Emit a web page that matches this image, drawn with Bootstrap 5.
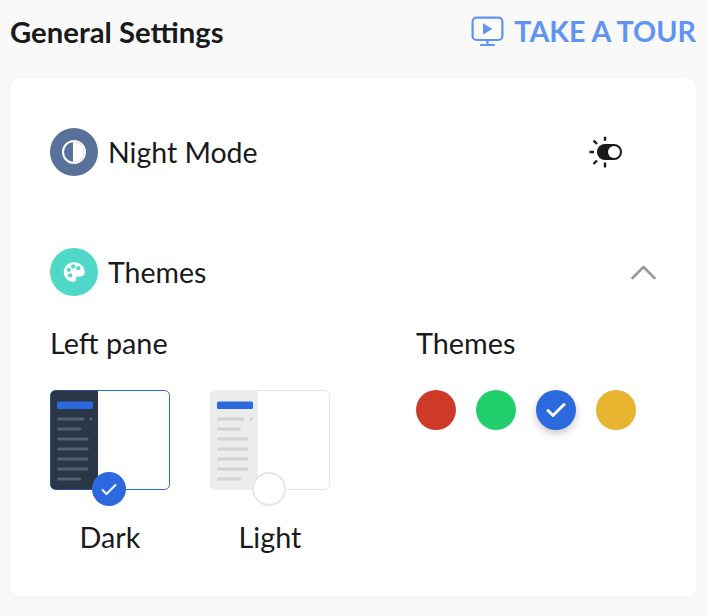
<!DOCTYPE html>
<html lang="en">
<head>
<meta charset="utf-8">
<title>General Settings</title>
<link rel="stylesheet" href="https://cdn.jsdelivr.net/npm/bootstrap@5.3.0/dist/css/bootstrap.min.css">
<style>
html,body{height:100%}
body{background:#f9f9f9;font-family:Lato,"Liberation Sans",sans-serif;color:#1a1a1c;overflow:hidden}
.page-wrap{width:708px;height:616px;padding:0 12px 20px 10px}
.top-bar{height:78px;padding-bottom:15px}
.page-title{font-size:29.300px;font-weight:700;line-height:1;margin:0}
.tour-link{font-size:28.700px;font-weight:700;color:#5f94f0;text-decoration:none;line-height:1;gap:10px}
.panel{background:#fff;border-radius:10px;height:518px;padding:50px 40px 0;box-shadow:0 0 12px rgba(0,0,0,.025)}
.feature-row{height:48px;gap:10px;font-size:28.500px;line-height:1}
.feature-icon{width:48px;height:48px;border-radius:50%}
.night-bg{background:#587199}
.theme-bg{background:#4fd8c8}
.toggle-slot{margin-right:33px}
.second-row{margin-top:72px}
.pick-row{margin-top:30px}
.pane-col{width:366px}
.pick-title{font-size:28.800px;line-height:34px;margin:0}
.thumb-row{margin-top:30px;gap:40px}
.thumb-item{width:120px}
.thumb-box{width:120px;height:100px}
.thumb-box svg{display:block}
.thumb-tick{position:absolute;left:41.500px;top:82px;width:34px;height:34px;border-radius:50%;background:#2c68de}
.thumb-empty{background:#fff;border:2px solid #e6e6e6}
.thumb-name{font-size:28.800px;line-height:34px;margin-top:30px;text-align:center}
.swatch-row{margin-top:30px;gap:20px}
.swatch{width:40px;height:40px;border-radius:50%}
.sw-red{background:#cd3a27}
.sw-green{background:#20cf6b}
.sw-blue{background:#2c68de;box-shadow:0 4px 8px rgba(0,0,0,.2)}
.sw-yellow{background:#e6b42e}
</style>
</head>
<body>
<div class="page-wrap">
  <div class="top-bar d-flex justify-content-between align-items-center">
    <h1 class="page-title">General Settings</h1>
    <a class="tour-link d-flex align-items-center" href="#">
      <svg width="33" height="31" viewBox="0 0 33 31" fill="none" stroke="#5f94f0" stroke-width="2.2">
        <rect x="1.600" y="1.600" width="29.800" height="22.400" rx="4"/>
        <path d="M12 7.200v11.400l9.400-5.700z" fill="#5f94f0" stroke="none"/>
        <path d="M16.500 24v4.500M10 29h13" stroke-linecap="round"/>
      </svg>
      <span>TAKE A TOUR</span>
    </a>
  </div>
  <div class="panel">
    <div class="feature-row d-flex align-items-center">
      <span class="feature-icon night-bg d-flex align-items-center justify-content-center">
        <svg width="24" height="24" viewBox="0 0 24 24">
          <circle cx="12" cy="12" r="11" fill="none" stroke="#fff" stroke-width="2"/>
          <path d="M12.500 1v22h-1.500V1z" fill="#fff"/>
          <path d="M12 2a10 10 0 0 1 0 20z" fill="#fff"/>
        </svg>
      </span>
      <span>Night Mode</span>
      <span class="ms-auto toggle-slot d-flex">
        <svg width="34" height="34" viewBox="0 0 34 34">
          <g stroke="#1a1a1c" stroke-width="2.400">
            <path d="M.5 17H5M16 1.700v4M16 27.500v5M4.500 5.500l3.500 3.500M4.500 29l3.500-3.500"/>
          </g>
          <rect x="8" y="9" width="25" height="16" rx="8" fill="#1a1a1c"/>
          <circle cx="25" cy="17" r="6" fill="#fff"/>
        </svg>
      </span>
    </div>
    <div class="feature-row second-row d-flex align-items-center">
      <span class="feature-icon theme-bg d-flex align-items-center justify-content-center">
        <svg width="24" height="24" viewBox="0 0 28 28">
          <path d="M14 2.500C7.500 2.500 2 7.600 2 14s5.500 11.500 11.500 11.500c2.600 0 3.300-1.500 2.800-3-.5-1.700.3-3.300 2.200-3.300h3.300c2.800 0 4.700-2 4.700-4.800C26.500 7.500 21 2.500 14 2.500z" fill="#fff"/>
          <g fill="#4fd8c8"><circle cx="8" cy="11.500" r="2.500"/><circle cx="13" cy="7.500" r="2.500"/><circle cx="19" cy="9.500" r="2.500"/><circle cx="9.500" cy="18" r="2.500"/></g>
        </svg>
      </span>
      <span>Themes</span>
      <span class="ms-auto d-flex">
        <svg width="26" height="16" viewBox="0 0 26 16" fill="none" stroke="#9a9a9a" stroke-width="2.600" stroke-linecap="round" stroke-linejoin="round">
          <path d="M2.500 14 13.500 3l11 11"/>
        </svg>
      </span>
    </div>
    <div class="pick-row d-flex">
      <div class="pane-col">
        <p class="pick-title">Left pane</p>
        <div class="thumb-row d-flex">
          <div class="thumb-item">
            <div class="thumb-box position-relative">
              <svg width="120" height="100" viewBox="0 0 120 100">
                <rect x=".5" y=".5" width="119" height="99" rx="5" fill="#fff" stroke="#2c68de"/>
                <path d="M5.500 .5H48v99H5.500a5 5 0 0 1-5-5V5.500a5 5 0 0 1 5-5z" fill="#2b3647"/>
                <rect x="7" y="11.500" width="36" height="7.500" rx="1.500" fill="#2c68de"/>
                <g fill="#56616f">
                  <rect x="7" y="27.500" width="27.500" height="3" rx="1.500"/><circle cx="41" cy="29" r="1.500"/>
                  <rect x="7" y="37.500" width="24" height="3" rx="1.500"/>
                  <rect x="7" y="47.500" width="31.500" height="3" rx="1.500"/>
                  <rect x="7" y="57.500" width="31.500" height="3" rx="1.500"/>
                  <rect x="7" y="67.500" width="31.500" height="3" rx="1.500"/>
                  <rect x="7" y="77.500" width="31.500" height="3" rx="1.500"/>
                  <rect x="7" y="87.500" width="24" height="3" rx="1.500"/>
                </g>
              </svg>
              <span class="thumb-tick d-flex align-items-center justify-content-center">
                <svg width="16" height="13" viewBox="0 0 16 13" fill="none" stroke="#fff" stroke-width="2" stroke-linecap="round" stroke-linejoin="round"><path d="M1.500 7l4 4 9-9"/></svg>
              </span>
            </div>
            <div class="thumb-name">Dark</div>
          </div>
          <div class="thumb-item">
            <div class="thumb-box position-relative">
              <svg width="120" height="100" viewBox="0 0 120 100">
                <rect x=".5" y=".5" width="119" height="99" rx="5" fill="#fff" stroke="#e6e6e6"/>
                <path d="M5.500 .5H48v99H5.500a5 5 0 0 1-5-5V5.500a5 5 0 0 1 5-5z" fill="#ececec"/>
                <rect x="7" y="11.500" width="36" height="7.500" rx="1.500" fill="#2c68de"/>
                <g fill="#d2d2d2">
                  <rect x="7" y="27.500" width="27.500" height="3" rx="1.500"/><circle cx="41" cy="29" r="1.500"/>
                  <rect x="7" y="37.500" width="24" height="3" rx="1.500"/>
                  <rect x="7" y="47.500" width="31.500" height="3" rx="1.500"/>
                  <rect x="7" y="57.500" width="31.500" height="3" rx="1.500"/>
                  <rect x="7" y="67.500" width="31.500" height="3" rx="1.500"/>
                  <rect x="7" y="77.500" width="31.500" height="3" rx="1.500"/>
                  <rect x="7" y="87.500" width="24" height="3" rx="1.500"/>
                </g>
              </svg>
              <span class="thumb-tick thumb-empty"></span>
            </div>
            <div class="thumb-name">Light</div>
          </div>
        </div>
      </div>
      <div>
        <p class="pick-title">Themes</p>
        <div class="swatch-row d-flex">
          <span class="swatch sw-red"></span>
          <span class="swatch sw-green"></span>
          <span class="swatch sw-blue d-flex align-items-center justify-content-center">
            <svg width="20" height="16" viewBox="0 0 20 16" fill="none" stroke="#fff" stroke-width="3" stroke-linecap="round" stroke-linejoin="round"><path d="M2 8.500l5 5 11-11"/></svg>
          </span>
          <span class="swatch sw-yellow"></span>
        </div>
      </div>
    </div>
  </div>
</div>
</body>
</html>
